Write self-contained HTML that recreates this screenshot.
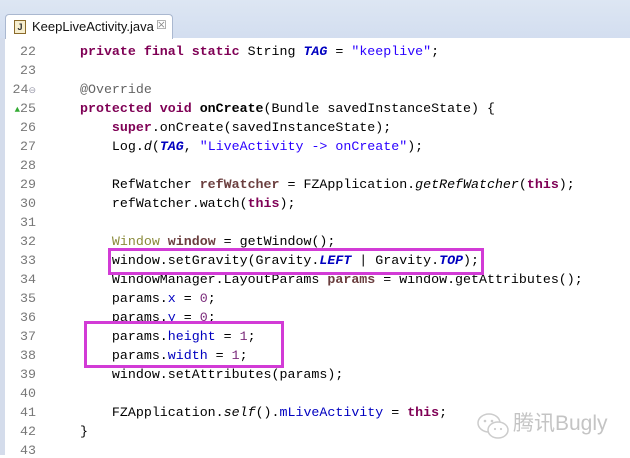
<!DOCTYPE html>
<html><head><meta charset="utf-8"><style>
body{margin:0;width:630px;height:455px;overflow:hidden;background:#fff;position:relative;font-family:"Liberation Mono",monospace;}
.top{position:absolute;left:0;top:0;width:630px;height:38px;background:linear-gradient(#dde6f3,#d3def0);}
.tab{position:absolute;left:5px;top:14px;width:166px;height:24px;background:#fff;border:1px solid #aab8d0;border-bottom:none;border-radius:4px 4px 0 0;font:13px "Liberation Sans",sans-serif;color:#111;}
.tab .ic{position:absolute;left:8px;top:5px;width:10px;height:12px;border:1px solid #8a6a2a;background:#f6eecf;font:bold 9px "Liberation Sans";text-align:center;line-height:12px;color:#333}
.tab .t{position:absolute;left:26px;top:4px;}
.tab .x{position:absolute;left:150px;top:3px;color:#888;font-size:12px}
.ed{position:absolute;left:0;top:38px;width:630px;height:417px;border-left:5px solid #d4dceb;box-sizing:border-box}
.ln{position:absolute;left:0;width:36px;text-align:right;color:#787878;font:13.3px "Liberation Mono",monospace;margin-top:2px}
.code{position:absolute;left:80px;white-space:pre;font-size:13.3px;color:#000;margin-top:2px}
.k{color:#7f0055;font-weight:bold}
.s{color:#2a00ff}
.f{color:#0000c0}
.sf{color:#0000c0;font-weight:bold;font-style:italic}
.i{font-style:italic}
.a{color:#646464}
.v{font-weight:bold;color:#6a3e3e}
.n{color:#7a2a7a}
.box{position:absolute;border:3px solid #d23bd6;box-sizing:border-box}
.wm{position:absolute;top:407px;font:21px "Liberation Sans","Noto Sans CJK SC",sans-serif;color:#c4c4c4}
</style></head><body>
<div class="top"></div>
<div class="tab"><div class="ic">J</div><div class="t">KeepLiveActivity.java</div><div class="x">☒</div></div>
<div class="ed"></div>
<div class="ln" style="top:42px">22</div><div class="code" style="top:42px"><span class="k">private final static</span> String <span class="sf">TAG</span> = <span class="s">"keeplive"</span>;</div>
<div class="ln" style="top:61px">23</div>
<div class="ln" style="top:80px">24<span style="font-size:9px;color:#99a">⊖</span></div><div class="code" style="top:80px"><span class="a">@Override</span></div>
<div class="ln" style="top:99px"><span style="color:#3a3;font-size:9px">▲</span>25</div><div class="code" style="top:99px"><span class="k">protected void</span> <b>onCreate</b>(Bundle savedInstanceState) {</div>
<div class="ln" style="top:118px">26</div><div class="code" style="top:118px">    <span class="k">super</span>.onCreate(savedInstanceState);</div>
<div class="ln" style="top:137px">27</div><div class="code" style="top:137px">    Log.<span class="i">d</span>(<span class="sf">TAG</span>, <span class="s">"LiveActivity -> onCreate"</span>);</div>
<div class="ln" style="top:156px">28</div>
<div class="ln" style="top:175px">29</div><div class="code" style="top:175px">    RefWatcher <span class="v">refWatcher</span> = FZApplication.<span class="i">getRefWatcher</span>(<span class="k">this</span>);</div>
<div class="ln" style="top:194px">30</div><div class="code" style="top:194px">    refWatcher.watch(<span class="k">this</span>);</div>
<div class="ln" style="top:213px">31</div>
<div class="ln" style="top:232px">32</div><div class="code" style="top:232px">    <span style="color:#8a8a3a">Window</span> <span class="v">window</span> = getWindow();</div>
<div class="ln" style="top:251px">33</div><div class="code" style="top:251px">    window.setGravity(Gravity.<span class="sf">LEFT</span> | Gravity.<span class="sf">TOP</span>);</div>
<div class="ln" style="top:270px">34</div><div class="code" style="top:270px">    WindowManager.LayoutParams <span class="v">params</span> = window.getAttributes();</div>
<div class="ln" style="top:289px">35</div><div class="code" style="top:289px">    params.<span class="f">x</span> = <span class="n">0</span>;</div>
<div class="ln" style="top:308px">36</div><div class="code" style="top:308px">    params.<span class="f">y</span> = <span class="n">0</span>;</div>
<div class="ln" style="top:327px">37</div><div class="code" style="top:327px">    params.<span class="f">height</span> = <span class="n">1</span>;</div>
<div class="ln" style="top:346px">38</div><div class="code" style="top:346px">    params.<span class="f">width</span> = <span class="n">1</span>;</div>
<div class="ln" style="top:365px">39</div><div class="code" style="top:365px">    window.setAttributes(params);</div>
<div class="ln" style="top:384px">40</div>
<div class="ln" style="top:403px">41</div><div class="code" style="top:403px">    FZApplication.<span class="i">self</span>().<span class="f">mLiveActivity</span> = <span class="k">this</span>;</div>
<div class="ln" style="top:422px">42</div><div class="code" style="top:422px">}</div>
<div class="ln" style="top:441px">43</div>
<div class="box" style="left:108px;top:248px;width:376px;height:27px"></div>
<div class="box" style="left:84px;top:321px;width:200px;height:47px"></div>
<svg style="position:absolute;left:476px;top:412px" width="34" height="30" viewBox="0 0 34 30"><g fill="none" stroke="#ccc" stroke-width="1.5"><ellipse cx="13" cy="11" rx="11" ry="9"/><ellipse cx="22" cy="18" rx="10" ry="8" fill="#fff"/></g><g fill="#ccc"><circle cx="9" cy="9" r="1.3"/><circle cx="16" cy="9" r="1.3"/><circle cx="19" cy="17" r="1.1"/><circle cx="25" cy="17" r="1.1"/></g></svg>
<div class="wm" style="left:513px">腾讯Bugly</div>
</body></html>
